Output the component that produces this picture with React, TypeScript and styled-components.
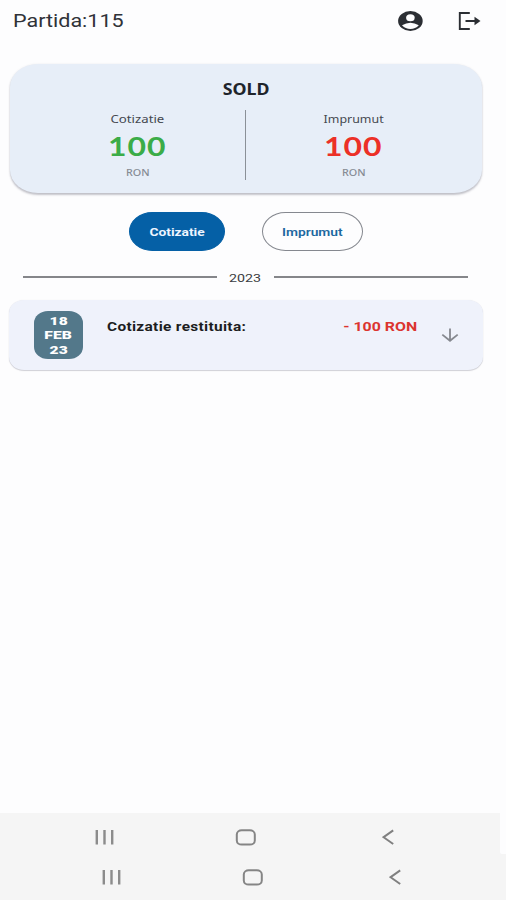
import React from "react";
import styled, { createGlobalStyle } from "styled-components";

const GlobalStyle = createGlobalStyle`
  * { box-sizing: border-box; }
  body { margin: 0; background: #fdfdfe; }
`;

const Screen = styled.div`
  width: 506px;
  height: 900px;
  display: flex;
  flex-direction: column;
  background: #fdfdfe;
  font-family: Roboto, "Liberation Sans", sans-serif;
  overflow: hidden;
`;

const Text = styled.span<{
  $size: number;
  $color: string;
  $line: number;
  $stretch?: number;
  $spacing?: number;
  $weight?: number;
  $family?: string;
  $origin?: string;
}>`
  display: block;
  font-family: ${(p) => p.$family ?? 'Roboto, "Liberation Sans"'}, sans-serif;
  font-size: ${(p) => p.$size}px;
  line-height: ${(p) => p.$line}px;
  font-weight: ${(p) => p.$weight ?? 400};
  letter-spacing: ${(p) => p.$spacing ?? 0}px;
  color: ${(p) => p.$color};
  white-space: nowrap;
  transform: scaleX(${(p) => p.$stretch ?? 1.2});
  transform-origin: ${(p) => p.$origin ?? "center"};
`;

const Header = styled.header`
  height: 64px;
  padding: 8px 24px 0 13px;
  display: flex;
  align-items: flex-start;
  justify-content: space-between;
`;

const Actions = styled.div`
  display: flex;
  gap: 34px;
  padding-top: 2px;
`;

const Card = styled.section`
  margin: 0 24px 0 10px;
  height: 129px;
  flex: none;
  padding-top: 14px;
  border-radius: 28px / 23px;
  background: #e7eef8;
  box-shadow: 0 2px 2px rgba(70, 70, 90, 0.3), 0 0 2px rgba(90, 90, 110, 0.12);
  display: flex;
  flex-direction: column;
  align-items: center;
`;

const Balances = styled.div`
  width: 100%;
  display: grid;
  grid-template-columns: 235px 1px 1fr;
  margin-top: 11px;
`;

const Divider = styled.div`
  height: 70px;
  margin-top: -1px;
  background: #8b9098;
`;

const Balance = styled.div<{ $shift: number }>`
  display: flex;
  flex-direction: column;
  align-items: center;
  padding-left: ${(p) => (p.$shift > 0 ? p.$shift : 0)}px;
  padding-right: ${(p) => (p.$shift < 0 ? -p.$shift : 0)}px;
`;

const Filters = styled.div`
  display: flex;
  gap: 37px;
  margin: 19px 0 0 129px;
`;

const Pill = styled.button<{ $active?: boolean; $width: number }>`
  width: ${(p) => p.$width}px;
  height: 39px;
  padding: 0;
  border-radius: 24px / 20px;
  border: 1px solid ${(p) => (p.$active ? "#0560a6" : "#85888f")};
  background: ${(p) => (p.$active ? "#0560a6" : "#fdfdfe")};
  display: flex;
  align-items: center;
  justify-content: center;
`;

const YearRow = styled.div`
  height: 16px;
  margin: 18px 38px 0 23px;
  display: flex;
  align-items: center;
  justify-content: space-between;
`;

const YearLabel = styled.div`
  padding: 2px 1px 0 0;
`;

const Rule = styled.div`
  width: 194px;
  height: 1.5px;
  background: #85868a;
`;

const Entry = styled.article`
  margin: 15px 23px 0 9px;
  height: 70px;
  flex: none;
  padding: 11px 24px 0 25px;
  border-radius: 15px / 13px;
  background: #eff2fb;
  box-shadow: 0 1px 1px rgba(60, 60, 80, 0.22), 0 0 1px rgba(60, 60, 80, 0.1);
  display: flex;
  align-items: flex-start;
`;

const DateBadge = styled.div`
  width: 49px;
  height: 48px;
  padding-top: 3px;
  border-radius: 14px / 12px;
  background: #53788a;
  display: flex;
  flex-direction: column;
  align-items: center;
`;

const EntryBody = styled.div`
  flex: 1;
  padding: 8px 24px 0 24px;
  display: flex;
  justify-content: space-between;
`;

const ArrowSlot = styled.div`
  padding-top: 17px;
  display: flex;
`;

const SystemBars = styled.footer`
  margin-top: auto;
  height: 87px;
  background: #f5f5f5;
`;

const NavBar = styled.div<{ $offset: number; $height: number; $width: number }>`
  width: ${(p) => p.$width}px;
  height: ${(p) => p.$height}px;
  padding: 16px 0 0 ${(p) => p.$offset}px;
  display: flex;
  align-items: flex-start;
`;

const LowerNavBar = styled(NavBar)`
  padding-top: 15px;
`;

const NavRow = styled.div`
  display: flex;
`;

const NavGap = styled.div<{ $width: number }>`
  width: ${(p) => p.$width}px;
`;

const TopStrip = styled.div`
  display: flex;
  height: 41px;
`;

const Notch = styled.div`
  width: 6px;
  height: 41px;
  border-radius: 0 0 0 2px;
  background: #fdfdfe;
`;

const noto = '"Noto Sans"';

const AccountIcon = () => (
  <svg width="26" height="22" viewBox="0 0 26 22">
    <ellipse cx="13.4" cy="11" rx="12.3" ry="10" fill="#2b2e33" />
    <ellipse cx="13.4" cy="7.8" rx="4.3" ry="3.5" fill="#fdfdfe" />
    <path d="M5 15.2 Q13.4 10.2 21.8 15.2 Q18.4 19 13.4 19 Q8.4 19 5 15.2Z" fill="#fdfdfe" />
  </svg>
);

const LogoutIcon = () => (
  <svg width="25" height="22" viewBox="0 0 25 22" fill="none" stroke="#2b2e33">
    <path d="M12.8 3H2.8V19H12.8" strokeWidth="1.9" />
    <path d="M8.5 11H19.5" strokeWidth="2" />
    <path d="M17.5 6.8L23.5 11L17.5 15.2Z" fill="#2b2e33" stroke="none" />
  </svg>
);

const DownIcon = () => (
  <svg width="18" height="15" viewBox="0 0 18 15" fill="none" stroke="#85888f" strokeWidth="1.8">
    <path d="M9 .5V12.7M1.3 6.6L9 12.8L16.7 6.6" />
  </svg>
);

const RecentsIcon = () => (
  <svg width="20" height="16" viewBox="0 0 20 16" stroke="#8c8c8c" strokeWidth="2.4">
    <path d="M2.8 1V15.5M10.5 1V15.5M18.2 1V15.5" />
  </svg>
);

const HomeIcon = () => (
  <svg width="22" height="17" viewBox="0 0 22 17" fill="none" stroke="#858585" strokeWidth="2">
    <rect x="2.8" y="1.2" width="18" height="14.4" rx="5" ry="4.2" />
  </svg>
);

const BackIcon = () => (
  <svg width="13" height="16" viewBox="0 0 13 16" fill="none" stroke="#808080" strokeWidth="2">
    <path d="M11.2 1.4L1.6 8.2L11.2 15" />
  </svg>
);

const NavIcons = () => (
  <NavRow>
    <RecentsIcon />
    <NavGap $width={120} />
    <HomeIcon />
    <NavGap $width={126} />
    <BackIcon />
  </NavRow>
);

const unit = "RON";

const balances = [
  { label: "Cotizatie", amount: "100", color: "#3bac48", shift: 20, stretch: 1.2 },
  { label: "Imprumut", amount: "100", color: "#ec3027", shift: -21, stretch: 1.13 },
];

const BalanceView = ({ label, amount, color, shift, stretch }: (typeof balances)[number]) => (
  <Balance $shift={shift}>
    <Text $size={11} $line={16} $color="#44484f" $family={noto} $stretch={stretch}>{label}</Text>
    <Text $size={27.5} $line={38} $color={color} $weight={700} $family="Lato" $stretch={1.16} $spacing={0.9}>{amount}</Text>
    <Text $size={9} $line={15} $color="#868b94" $family={noto} $weight={500}>{unit}</Text>
  </Balance>
);

export default function App() {
  return (
    <Screen>
      <GlobalStyle />
      <Header>
        <Text $size={17.5} $line={26} $color="#303238" $origin="left" $stretch={1.23}>Partida:115</Text>
        <Actions>
          <AccountIcon />
          <LogoutIcon />
        </Actions>
      </Header>
      <Card>
        <Text $size={16} $line={22} $color="#20242b" $weight={700} $family={noto} $stretch={1.11}>SOLD</Text>
        <Balances>
          <BalanceView {...balances[0]} />
          <Divider />
          <BalanceView {...balances[1]} />
        </Balances>
      </Card>
      <Filters>
        <Pill $active $width={96}>
          <Text $size={11.5} $line={16} $color="#eef5ff" $weight={700}>Cotizatie</Text>
        </Pill>
        <Pill $width={101}>
          <Text $size={11.5} $line={16} $color="#1d68a0" $weight={600}>Imprumut</Text>
        </Pill>
      </Filters>
      <YearRow>
        <Rule />
        <YearLabel>
          <Text $size={11.5} $line={16} $color="#3c3e42" $stretch={1.24}>2023</Text>
        </YearLabel>
        <Rule />
      </YearRow>
      <Entry>
        <DateBadge>
          {["18", "FEB", "23"].map((part) => (
            <Text key={part} $size={11.5} $line={14.4} $color="#ffffff" $weight={900} $stretch={1.36}>{part}</Text>
          ))}
        </DateBadge>
        <EntryBody>
          <Text $size={12.3} $line={16} $color="#1c1d21" $weight={700} $origin="left" $stretch={1.255} $spacing={0.25}>Cotizatie restituita:</Text>
          <Text $size={12.5} $line={16} $color="#dc342f" $weight={700} $origin="right" $stretch={1.27}>- 100 RON</Text>
        </EntryBody>
        <ArrowSlot><DownIcon /></ArrowSlot>
      </Entry>
      <SystemBars>
        <TopStrip>
          <NavBar $offset={94} $height={41} $width={500}><NavIcons /></NavBar>
          <Notch />
        </TopStrip>
        <LowerNavBar $offset={101} $height={46} $width={506}><NavIcons /></LowerNavBar>
      </SystemBars>
    </Screen>
  );
}
